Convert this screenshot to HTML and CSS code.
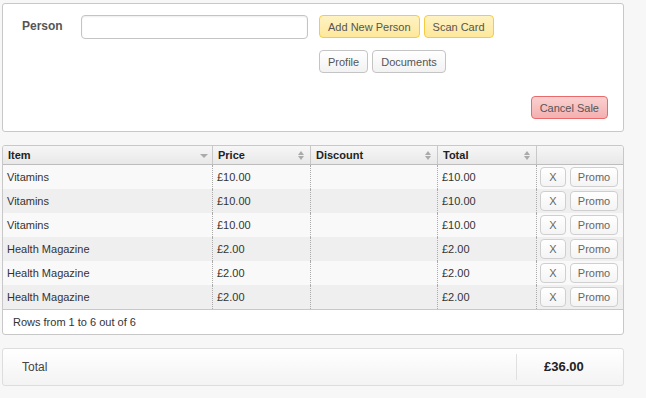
FILE: index.html
```html
<!DOCTYPE html>
<html lang="en">
<head>
    <meta charset="UTF-8">
    <title>Sale</title>
    <link rel="stylesheet" href="styles.css">
</head>
<body>
    <div class="panel person-panel">
        <label class="person-label" for="person">Person</label>
        <input type="text" id="person" class="person-input">
        <div class="actions">
            <div class="btn-row">
                <button class="btn btn-yellow">Add New Person</button>
                <button class="btn btn-yellow">Scan Card</button>
            </div>
            <div class="btn-row">
                <button class="btn">Profile</button>
                <button class="btn">Documents</button>
            </div>
            <div class="btn-row cancel-row">
                <button class="btn btn-red">Cancel Sale</button>
            </div>
        </div>
    </div>

    <div class="panel grid-panel">
        <table class="grid">
            <thead>
                <tr>
                    <th class="col-item">Item <span class="sort-down"></span></th>
                    <th class="col-price">Price <span class="sort"></span></th>
                    <th class="col-discount">Discount <span class="sort"></span></th>
                    <th class="col-total">Total <span class="sort"></span></th>
                    <th class="col-actions"></th>
                </tr>
            </thead>
            <tbody>
                <tr><td>Vitamins</td><td>£10.00</td><td></td><td>£10.00</td><td class="row-btns"><button class="btn btn-sm btn-x">X</button><button class="btn btn-sm btn-promo">Promo</button></td></tr>
                <tr><td>Vitamins</td><td>£10.00</td><td></td><td>£10.00</td><td class="row-btns"><button class="btn btn-sm btn-x">X</button><button class="btn btn-sm btn-promo">Promo</button></td></tr>
                <tr><td>Vitamins</td><td>£10.00</td><td></td><td>£10.00</td><td class="row-btns"><button class="btn btn-sm btn-x">X</button><button class="btn btn-sm btn-promo">Promo</button></td></tr>
                <tr><td>Health Magazine</td><td>£2.00</td><td></td><td>£2.00</td><td class="row-btns"><button class="btn btn-sm btn-x">X</button><button class="btn btn-sm btn-promo">Promo</button></td></tr>
                <tr><td>Health Magazine</td><td>£2.00</td><td></td><td>£2.00</td><td class="row-btns"><button class="btn btn-sm btn-x">X</button><button class="btn btn-sm btn-promo">Promo</button></td></tr>
                <tr><td>Health Magazine</td><td>£2.00</td><td></td><td>£2.00</td><td class="row-btns"><button class="btn btn-sm btn-x">X</button><button class="btn btn-sm btn-promo">Promo</button></td></tr>
            </tbody>
        </table>
        <div class="grid-footer">Rows from 1 to 6 out of 6</div>
    </div>

    <div class="panel total-panel">
        <span class="total-label">Total</span>
        <span class="total-value">£36.00</span>
    </div>
</body>
</html>
```

FILE: styles.css
```css
body {
    margin: 0;
    padding: 3px 0 0 2px;
    background: #f7f7f7;
    font-family: "Liberation Sans", Arial, sans-serif;
    font-size: 11px;
    color: #333;
}
.panel {
    width: 620px;
    background: #fff;
    border: 1px solid #c8c8c8;
    border-radius: 3px;
}
.person-panel {
    display: flex;
    align-items: flex-start;
    padding: 11px 0 12px 0;
    margin-bottom: 13px;
}
.person-label {
    width: 59px;
    padding-left: 19px;
    margin-top: 4px;
    font-weight: bold;
    font-size: 12px;
    color: #555;
}
.person-input {
    width: 223px;
    height: 20px;
    margin: 0;
    padding: 1px;
    border: 1px solid #c4c4c4;
    border-radius: 4px;
    box-shadow: inset 0 1px 2px #eee;
}
.actions {
    flex: 1;
    margin-left: 11px;
    padding-right: 15px;
}
.btn-row {
    display: flex;
    gap: 4px;
    margin-bottom: 12px;
}
.cancel-row {
    justify-content: flex-end;
    margin: 23px 0 0 0;
}
.btn {
    height: 23px;
    padding: 0 8px;
    font-family: "Liberation Sans", Arial, sans-serif;
    font-size: 11px;
    color: #555;
    background: linear-gradient(#fff, #f2f2f2);
    border: 1px solid #c4c4c4;
    border-radius: 4px;
    cursor: pointer;
}
.btn-yellow {
    background: linear-gradient(#fff3c4, #fde89a);
    border-color: #f5cc40;
}
.btn-red {
    background: linear-gradient(#fad0d0, #f5b0b0);
    border-color: #e86a6a;
}
.grid-panel {
    margin-bottom: 13px;
    overflow: hidden;
}
.grid {
    width: 100%;
    border-collapse: collapse;
}
.grid th {
    height: 18px;
    padding: 0 0 0 5px;
    text-align: left;
    font-weight: bold;
    color: #222;
    background: linear-gradient(#f6f6f6, #e8e8e8);
    border-bottom: 1px solid #bdbdbd;
    border-right: 1px solid #c8c8c8;
    position: relative;
}
.grid th:last-child {
    border-right: none;
}
.col-item { width: 204px; }
.col-price { width: 92px; }
.col-discount { width: 121px; }
.col-total { width: 93px; }
.sort, .sort-down {
    position: absolute;
    right: 5px;
    top: 5px;
    width: 7px;
    height: 9px;
}
.sort::before, .sort::after {
    content: "";
    position: absolute;
    left: 0;
    border-left: 3.5px solid transparent;
    border-right: 3.5px solid transparent;
}
.sort::before {
    top: 0;
    border-bottom: 4px solid #aaa;
}
.sort::after {
    bottom: 0;
    border-top: 4px solid #aaa;
}
.sort-down::after {
    content: "";
    position: absolute;
    top: 3px;
    left: 0;
    border-left: 4px solid transparent;
    border-right: 4px solid transparent;
    border-top: 4px solid #aaa;
}
.grid td {
    height: 24px;
    padding: 0 0 0 4px;
    vertical-align: top;
    line-height: 24px;
    border-right: 1px dotted #aaa;
    color: #333;
    white-space: nowrap;
}
.grid td:last-child {
    border-right: none;
}
.grid tbody tr:nth-child(odd) td {
    background: #f9f9f9;
}
.grid tbody tr:nth-child(even) td {
    background: #efefef;
}
.grid td.row-btns {
    padding: 0 0 0 3px;
    vertical-align: middle;
    line-height: 0;
}
.btn-sm {
    height: 20px;
    padding: 0;
    margin-right: 4px;
    font-size: 11px;
    line-height: 18px;
    color: #666;
    background: linear-gradient(#fff, #f4f4f4);
    border-color: #cfcfcf;
    vertical-align: top;
}
.btn-x { width: 26px; }
.btn-promo { width: 48px; }
.grid tbody tr:last-child td {
    border-bottom: 1px solid #c8c8c8;
}
.grid-footer {
    height: 24px;
    line-height: 24px;
    padding-left: 10px;
    color: #333;
}
.total-panel {
    display: flex;
    align-items: center;
    height: 36px;
    background: linear-gradient(#fff, #f3f3f3);
    border-color: #ddd;
}
.total-label {
    flex: 1;
    padding-left: 19px;
    font-size: 12px;
    color: #444;
}
.total-value {
    box-sizing: border-box;
    width: 107px;
    height: 26px;
    line-height: 26px;
    padding-left: 27px;
    border-left: 1px solid #e0e0e0;
    font-weight: bold;
    font-size: 13px;
    color: #222;
}
```
